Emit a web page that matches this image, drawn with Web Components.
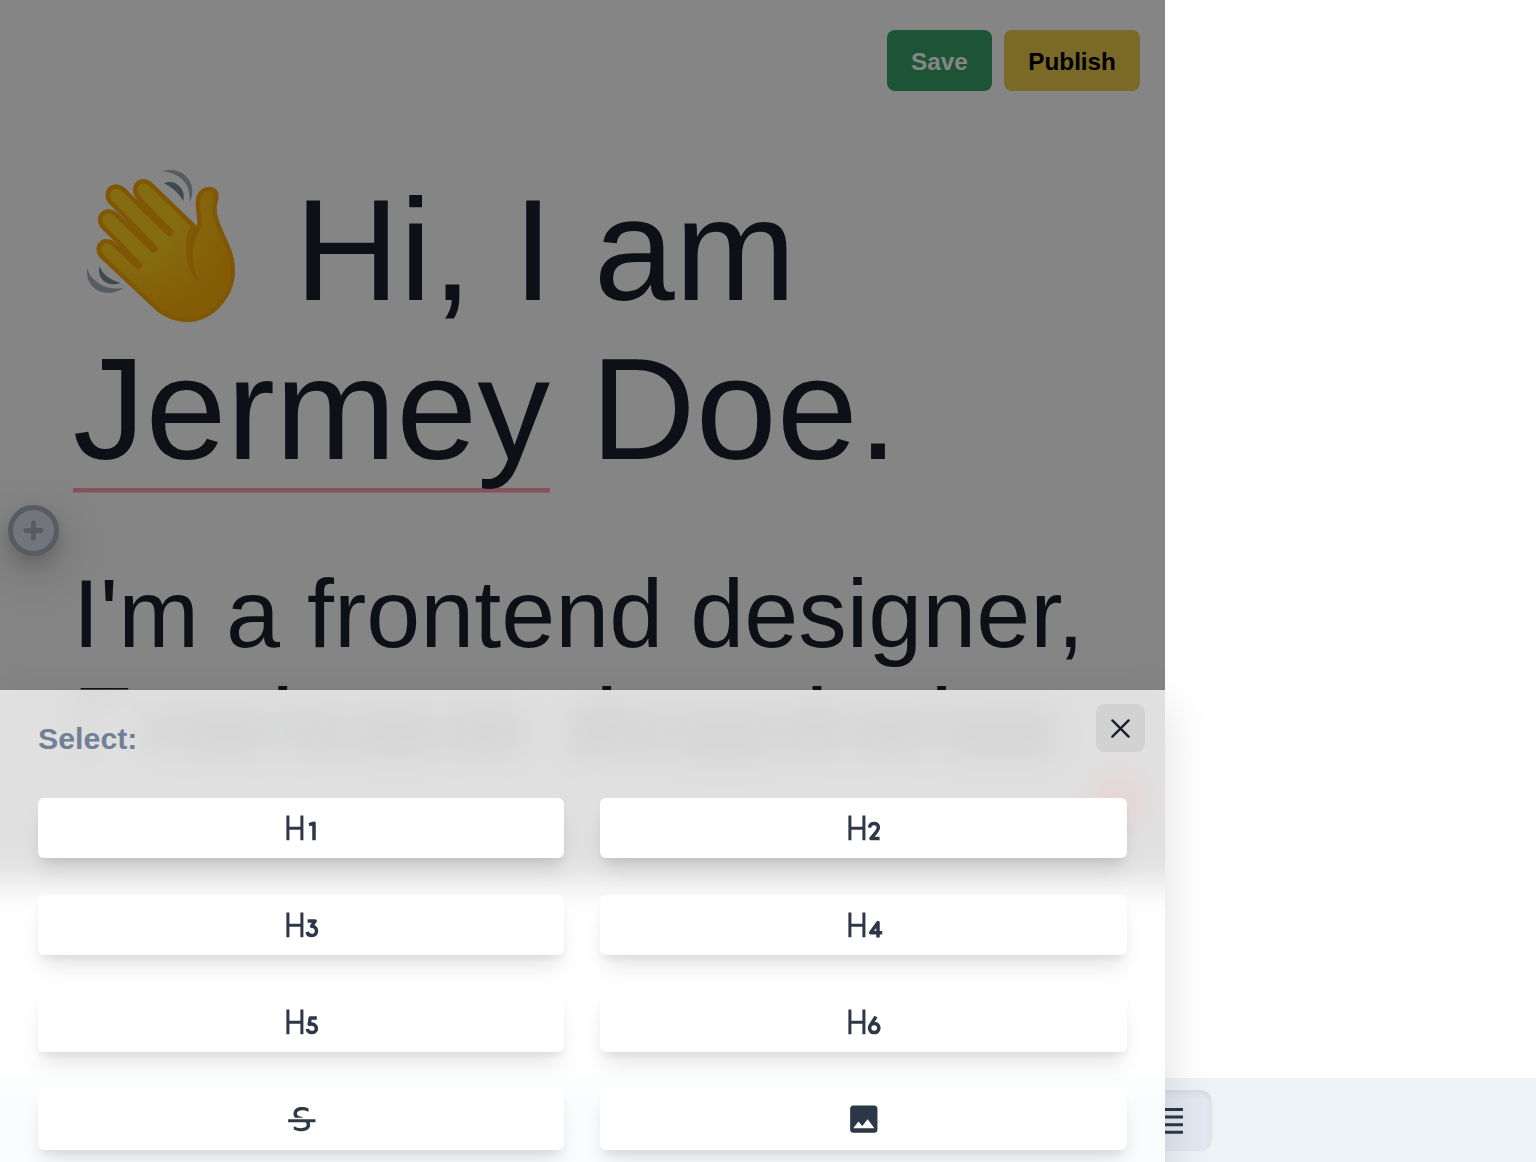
<!DOCTYPE html>
<html lang="en"><head><meta charset="utf-8"><title>Page editor</title>
<style>
html,body{margin:0;height:1162px;overflow:hidden;background:#fff}
body{font-family:"Liberation Sans",Arial,sans-serif;color:#1a202c}
</style></head><body>
<editor-app></editor-app>
<script>
const define=(name,html,after)=>customElements.define(name,class extends HTMLElement{
  constructor(){super();this.attachShadow({mode:'open'}).innerHTML=html;}
  connectedCallback(){if(after)after(this,this.shadowRoot);}
});

define('action-button',`<style>
:host{display:block;box-sizing:border-box;height:60.7px;padding:0 24.27px;border-radius:8px;font-size:24.27px;line-height:64px;font-weight:700;background:var(--fill);color:var(--ink)}
</style><slot></slot>`);

define('insert-button',`<style>
:host{display:block;box-sizing:border-box;width:51px;height:51px;border-radius:50%;border:5px solid #a5afc0;background:#dae2ee;box-shadow:0 15px 50px rgba(0,0,0,.26),0 8px 16px rgba(0,0,0,.14)}
svg{display:block}
</style><svg width="41" height="41" viewBox="0 0 41 41" stroke="#a5afc0" stroke-width="5" stroke-linecap="round"><path d="M20.5 13v15M13 20.5h15"/></svg>`);

define('waving-hand',`<style>
:host{display:inline-block;width:181.2px;height:100px;vertical-align:baseline}
svg{display:block;overflow:visible;margin-top:-34px}
</style><svg width="179.6" height="160" viewBox="39 48 539 480" fill="none">
<defs><radialGradient id="g" gradientUnits="userSpaceOnUse" cx="230" cy="200" r="300"><stop offset=".35" stop-color="#ffd020"/><stop offset="1" stop-color="#ffb00c"/></radialGradient>
<path id="p" d="M413 230L277 99C262 84 240 84 228 97C214 113 217 132 232 149L270 188L195 114C178 99 156 100 144 114C133 129 135 148 149 163L235 249L170 187C153 173 132 175 121 189C109 205 113 224 127 238L193 303L163 276C146 263 127 265 116 279C105 294 109 312 123 326L285 478C347 532 432 530 488 462C530 410 532 353 514 300C495 250 468 210 470 172C472 155 477 148 475 133C471 106 438 106 421 122C403 139 407 165 410 188Z"/>
<clipPath id="c"><use href="#p"/></clipPath></defs>
<use href="#p" fill="url(#g)"/>
<g clip-path="url(#c)" stroke="#f4a80e" stroke-linecap="round"><use href="#p" stroke-width="26" stroke-linejoin="round"/><path stroke-width="24" d="M243 163L329 246M205 220L281 296M180 292L234 345"/></g>
<path fill="#f4a80e" d="M398 222C372 250 368 342 411 394Q418 392 414 383C385 320 402 265 424 232Z"/>
<path fill="#a4b2b8" d="M306 64C366 44 418 98 389 157C390 124 384 104 366 88C350 74 330 66 306 64ZM82 354C72 414 136 452 190 414C158 418 132 412 114 398C94 384 86 372 82 354Z"/>
<path fill="#788f97" d="M312 100C342 85 380 114 370 152C356 130 338 113 312 100ZM119 349C128 374 151 391 181 398C145 415 108 386 119 349Z"/>
</svg>`);

const H='<path d="M4.9 5.4v24.8M18.9 5.4v24.8M4.9 18.2h14" stroke-width="3"/>';
const strokes={
 h1:'<path d="M26 14.6l5-1.3v17"/>',
 h2:'<path d="M24.6 17.6c.2-5.6 8.8-5.5 8.8-.1 0 3.4-3.8 6-7.4 11.1h8.6"/>',
 h3:'<path d="M24.6 13.9h7.6l-3.6 5.4c6.5-.3 6.5 9.3.4 9.3-2.7 0-4.4-1.2-4.8-3.7"/>',
 h4:'<path d="M33 30.4v-14.8l-7.4 10.1h11.6"/>',
 h5:'<path d="M33.8 13.9h-6.6l-1 6.4c8.7-2.1 9.2 8.3 2.9 8.3-2.6 0-4.4-1.2-4.9-3.6"/>',
 h6:'<path d="M31 12.6l-5.2 8.2M29.2 19.4a4.6 4.6 0 1 1-.01 0z"/>'
};
const fills={
 strike:'M17.154 14c.23.516.346 1.09.346 1.72 0 1.342-.524 2.392-1.571 3.147C14.88 19.622 13.433 20 11.586 20c-1.64 0-3.263-.381-4.87-1.144V16.6c1.52.877 3.075 1.316 4.666 1.316 2.551 0 3.83-.732 3.839-2.197a2.21 2.21 0 0 0-.648-1.603l-.12-.117H3v-2h18v2h-3.846zm-4.078-3H7.629a4.086 4.086 0 0 1-.481-.522C6.716 9.92 6.5 9.246 6.5 8.452c0-1.236.466-2.287 1.397-3.153C8.83 4.433 10.271 4 12.222 4c1.471 0 2.879.328 4.222.984v2.152c-1.2-.687-2.515-1.03-3.946-1.03-2.48 0-3.719.782-3.719 2.346 0 .42.218.786.654 1.099.436.313.974.562 1.613.75.62.18 1.297.414 2.03.699z',
 image:'M21 19V5c0-1.1-.9-2-2-2H5c-1.1 0-2 .9-2 2v14c0 1.1.9 2 2 2h14c1.1 0 2-.9 2-2zM8.5 13.5l2.5 3.01L14.5 12l4.5 6H5l3.5-4.5z'
};
define('block-option',`<style>
:host{display:flex;align-items:center;justify-content:center;height:60.7px;border-radius:6px;background:#fff;color:#2d3748;box-shadow:0 15.2px 22.8px -4.5px rgba(0,0,0,.1),0 6px 9px -3px rgba(0,0,0,.07)}
svg{display:block;overflow:visible}
</style><div></div>`,(el,root)=>{
 const k=el.getAttribute('kind');
 root.querySelector('div').innerHTML=strokes[k]
  ?`<svg width="36" height="36" viewBox="0 0 36 36" fill="none" stroke="currentColor" stroke-width="3.5" stroke-linejoin="round">${H}${strokes[k]}</svg>`
  :`<svg width="36.4" height="36.4" viewBox="-.4 0 24 24" fill="currentColor"><path d="${fills[k]}"/></svg>`;
});

define('close-button',`<style>
:host{display:flex;align-items:center;justify-content:center;width:48.5px;height:48.5px;border-radius:8px;background:rgba(0,0,0,.06)}
</style><svg width="20" height="20" viewBox="0 0 20 20" stroke="#1a202c" stroke-width="2.4" stroke-linecap="round"><path d="M2.4 2.4l16.2 16.2M18.6 2.4L2.4 18.6"/></svg>`);

/* Soft silhouette of the page that lies under the frosted panel. */
define('frosted-backdrop',`<style>
:host{display:block;position:absolute;inset:-1px;overflow:hidden;background:#fff;z-index:-1}
svg{display:block;position:absolute;left:0;top:0;overflow:visible;filter:blur(17px)}
:host::after{content:"";position:absolute;inset:0;background:rgba(255,255,255,.75)}
</style><svg width="1165" height="600" viewBox="0 689.5 1165 600">
<path fill="#fff" d="M-100 600h1365v800H-100z"/><path fill="#848484" d="M-100 600h1365v283H-100z"/><path fill="#edf2f7" d="M-100 1078h1365v300H-100z"/>
<g fill="#0d1017"><path opacity=".42" d="M80 670h10v84H80zM90 680h38v17H90zM145 708h26v44h-26zM277 680h9v30h-9zM570 708h42v48h-42zM602 680h9v30h-9zM812 680h9v30h-9zM937 680h9v30h-9z"/><path opacity=".36" d="M180 708h92v46h-92zM286 708h60v46h-60zM355 708h80v50h-80zM445 708h80v46h-80zM618 708h50v46h-50zM676 708h96v52h-96zM780 708h64v46h-64zM852 708h80v46h-80zM945 708h112v50h-112z"/></g>
<circle cx="1118" cy="799" r="19" fill="#b82c3e"/></svg>`);

define('block-picker',`<style>
:host{display:block;box-sizing:border-box;height:600px;padding:13.2px 37px 0 37px;border:1px solid rgba(255,255,255,.35);border-right-color:rgba(0,0,0,.1);box-shadow:0 15px 45px rgba(0,0,0,.13);isolation:isolate}
header{display:flex;justify-content:space-between;align-items:flex-start;height:93.9px;margin-right:-18px}
h3{margin:17.5px 0 0;font-size:30.34px;line-height:36px;font-weight:700;color:#718096}
main{display:grid;grid-template-columns:1fr 1fr;gap:36.4px}
</style><frosted-backdrop></frosted-backdrop><header><h3>Select:</h3><close-button></close-button></header>
<main><block-option kind="h1"></block-option><block-option kind="h2"></block-option><block-option kind="h3"></block-option><block-option kind="h4"></block-option><block-option kind="h5"></block-option><block-option kind="h6"></block-option><block-option kind="strike"></block-option><block-option kind="image"></block-option></main>`);

define('page-document',`<style>
:host{display:block}
nav{display:flex;justify-content:flex-end;gap:12.1px;padding:30.3px 24.3px 0}
article{padding:79px 0 0 72.8px}
h1,h2{margin:0;font-weight:400}
h1{font-size:145.6px;line-height:159px}
h1 span{padding-bottom:6px;background:linear-gradient(#fe9fae,#fe9fae) 0 161px/100% 4.6px no-repeat}
h2{margin-top:71px;font-size:97.07px;line-height:109.2px;white-space:nowrap}
</style><nav><action-button style="--fill:#38a169;--ink:#fff">Save</action-button><action-button style="--fill:#ecc94b;--ink:#000">Publish</action-button></nav>
<article><h1><waving-hand></waving-hand> Hi, I am<br><span>Jermey</span> Doe.</h1><h2>I'm a frontend designer,</h2></article>`);

define('format-bar',`<style>
:host{display:flex;box-sizing:border-box;height:84px;padding:12px 0 0 1114px;background:#edf2f7}
div{display:flex;align-items:center;justify-content:center;width:97.5px;height:60.7px;border-radius:12px;background:#e2e8f0;box-shadow:inset 0 3px 6px rgba(0,0,0,.06)}
</style><div><svg width="42" height="30" viewBox="0 0 42 30" stroke="#2d3748" stroke-width="3"><path d="M0 4.6h41M0 12.1h41M0 19.7h41M0 27.3h41"/></svg></div>`);

define('editor-app',`<style>
:host{display:flex;flex-direction:column;position:relative;width:1536px;height:1162px;overflow:hidden}
page-document{width:1164.5px;height:1078px;overflow:hidden;flex:none}
format-bar{flex:none}
insert-button{position:absolute;left:7.7px;top:505px}
.peek{position:absolute;left:0;top:680px;display:block}
.shade{position:absolute;left:0;top:0;width:1164.5px;height:883px;background:rgba(0,0,0,.48)}
block-picker{position:absolute;left:0;top:689.5px;width:1164.5px}
</style><page-document></page-document><format-bar></format-bar><insert-button></insert-button>
<svg class="peek" width="1164" height="12" viewBox="0 680 1164 12" fill="#1a202c"><path d="M80.6 689.5v-1.4h47.6v1.4zM278.3 692v-6h8.8v6zM602.3 692v-6h8.8v6zM812.6 692v-6h8.8v6zM937.2 692v-6h8.8v6z"/></svg>
<div class="shade"></div><block-picker></block-picker>`);
</script></body></html>
